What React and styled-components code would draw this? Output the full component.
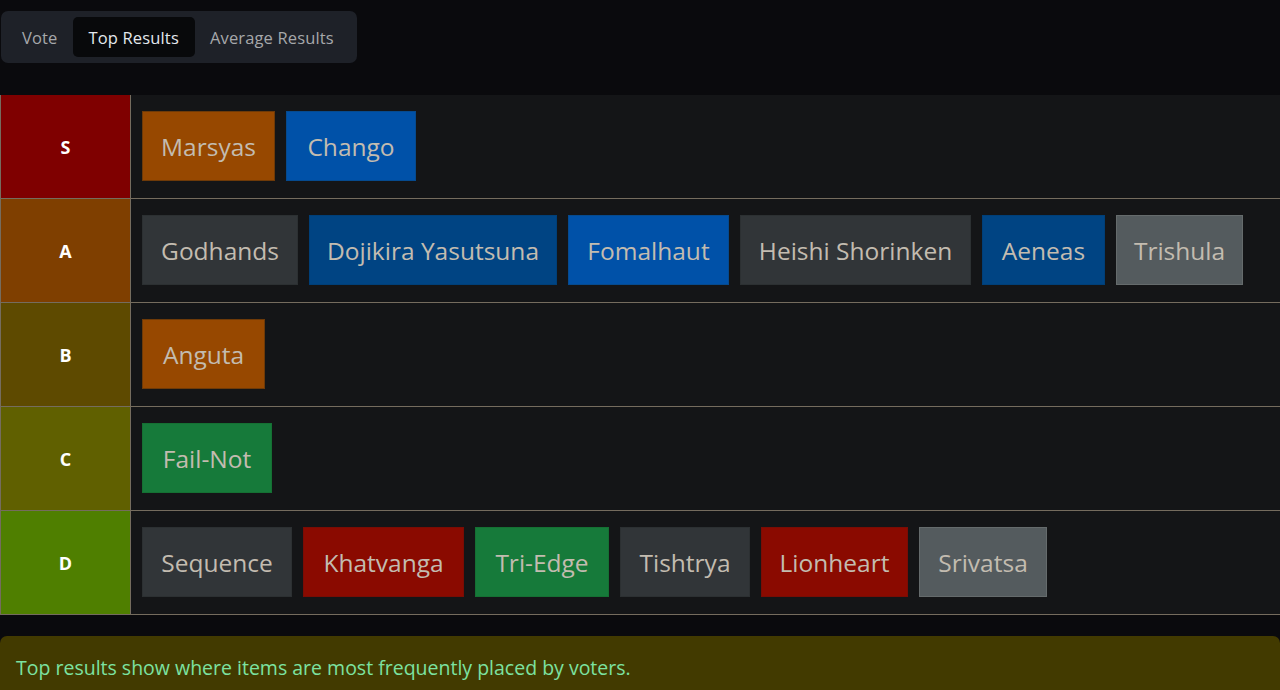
import React, { useState } from "react";
import styled, { createGlobalStyle } from "styled-components";

const GlobalStyle = createGlobalStyle`
html, body {
margin:0;
padding:0;
background:#0a0a0d;
font-family:"Open Sans","Noto Sans",sans-serif;
}
`;

const Page = styled.div`
width:1280px;
height:690px;
overflow:hidden;
padding-top:11px;
box-sizing:border-box;
`;

const Tabs = styled.div`
display:inline-flex;
align-items:center;
margin-left:1px;
padding:6px 8px 6px 6px;
background:#1e2128;
border-radius:7px;
`;

const Tab = styled.button`
border:none;
height:40px;
padding:0 ${({active}) => active ? "16px" : "15px"};
border-radius:5px;
background:${({active}) => active ? "#08090b" : "transparent"};
color:${({active}) => active ? "#e3e8ee" : "#a6a8ab"};
font-family:inherit;
font-size:16.5px;
letter-spacing:0.15px;
cursor:pointer;
`;

const Table = styled.div`
margin-top:32px;
display:flex;
flex-direction:column;
`;

const Row = styled.div`
display:flex;
height:104px;
border-bottom:1px solid #756c5e;
box-sizing:border-box;
`;

const Label = styled.div`
width:131px;
flex-shrink:0;
display:flex;
align-items:center;
justify-content:center;
background:${({color}) => color};
border-left:1px solid #756c5e;
border-right:1px solid #756c5e;
box-sizing:border-box;
color:#fff;
font-weight:700;
font-size:18px;
`;

const Items = styled.div`
flex:1;
display:flex;
align-items:flex-start;
gap:11px;
padding:16px 11px;
background:#141517;
`;

const Item = styled.div`
width:${({w}) => w}px;
height:70px;
box-sizing:border-box;
display:flex;
align-items:center;
justify-content:center;
background:${({bg}) => bg};
border:1px solid ${({bd}) => bd};
color:#c3bcb0;
font-size:24.5px;
white-space:nowrap;
`;

const Note = styled.div`
margin-top:21px;
background:#423a00;
border-radius:7px 7px 0 0;
padding:18px 16px;
color:#7ce2a0;
font-size:19.5px;
`;

const C = {
  orange: ["#974800", "#6e3a08"],
  blue: ["#0051a8", "#064a8e"],
  navy: ["#004483", "#003f78"],
  gray: ["#313538", "#2c3032"],
  light: ["#545b5e", "#656b6c"],
  red: ["#8a0a00", "#7a0c04"],
  green: ["#167a3a", "#157033"],
};

const tiers = [
  { name: "S", color: "#7f0000", items: [["Marsyas", 133, "orange"], ["Chango", 130, "blue"]] },
  { name: "A", color: "#7f3f00", items: [["Godhands", 156, "gray"], ["Dojikira Yasutsuna", 248, "navy"], ["Fomalhaut", 161, "blue"], ["Heishi Shorinken", 231, "gray"], ["Aeneas", 123, "navy"], ["Trishula", 127, "light"]] },
  { name: "B", color: "#5e4a00", items: [["Anguta", 123, "orange"]] },
  { name: "C", color: "#606000", items: [["Fail-Not", 130, "green"]] },
  { name: "D", color: "#4f7f00", items: [["Sequence", 150, "gray"], ["Khatvanga", 161, "red"], ["Tri-Edge", 134, "green"], ["Tishtrya", 130, "gray"], ["Lionheart", 147, "red"], ["Srivatsa", 128, "light"]] },
];

const App = () => {
  const [tab, setTab] = useState("top");
  return (
    <Page>
      <GlobalStyle />
      <Tabs>
        <Tab active={tab === "vote"} onClick={() => setTab("vote")}>Vote</Tab>
        <Tab active={tab === "top"} onClick={() => setTab("top")}>Top Results</Tab>
        <Tab active={tab === "avg"} onClick={() => setTab("avg")}>Average Results</Tab>
      </Tabs>
      <Table>
        {tiers.map((t) => (
          <Row key={t.name}>
            <Label color={t.color}>{t.name}</Label>
            <Items>
              {t.items.map(([n, w, c]) => (
                <Item key={n} w={w} bg={C[c][0]} bd={C[c][1]}>{n}</Item>
              ))}
            </Items>
          </Row>
        ))}
      </Table>
      <Note>Top results show where items are most frequently placed by voters.</Note>
    </Page>
  );
};

export default App;
